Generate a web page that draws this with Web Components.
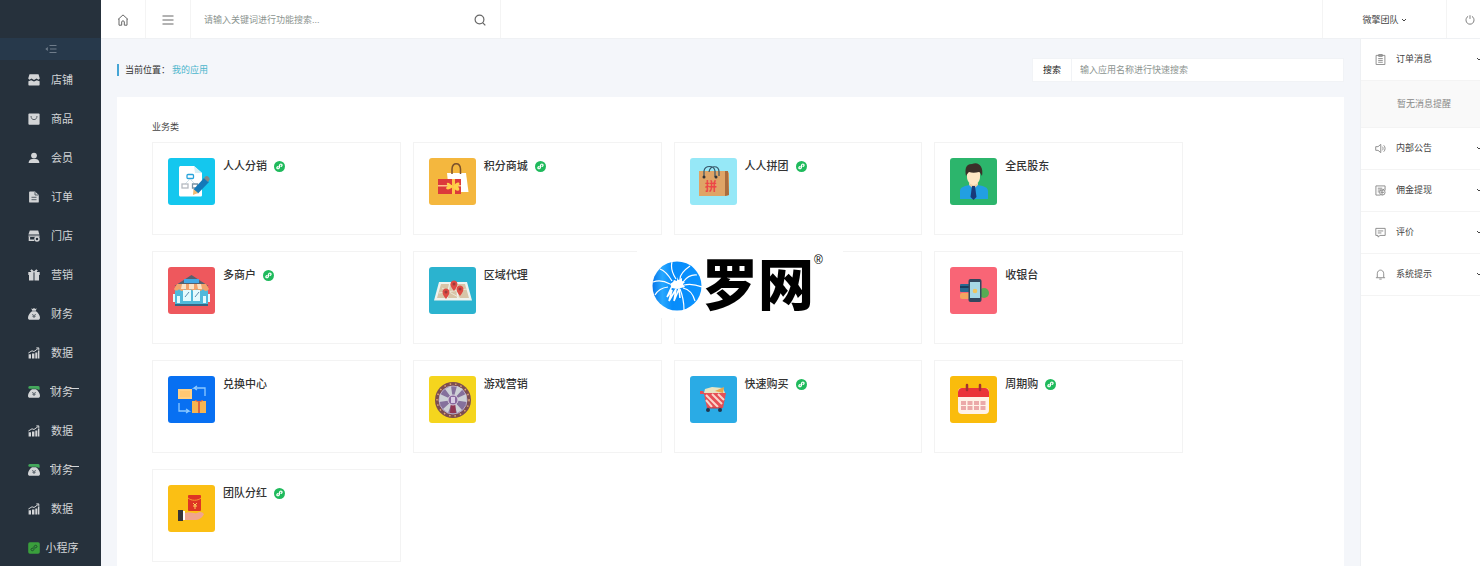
<!DOCTYPE html>
<html lang="zh-CN">
<head>
<meta charset="utf-8">
<title>我的应用</title>
<style>
html, body { margin: 0; height: 100%; }
body { overflow: hidden; background: #f4f6fa; color: #444; font: 9px/16px "Liberation Sans", "Noto Sans CJK SC", sans-serif; }
</style>
</head>
<body>
<app-shell>
  <side-nav slot="nav">
    <nav-item icon="shop">店铺</nav-item>
    <nav-item icon="goods">商品</nav-item>
    <nav-item icon="member">会员</nav-item>
    <nav-item icon="order">订单</nav-item>
    <nav-item icon="store">门店</nav-item>
    <nav-item icon="gift">营销</nav-item>
    <nav-item icon="money">财务</nav-item>
    <nav-item icon="data">数据</nav-item>
    <nav-item icon="moneyGreen" marked>财务</nav-item>
    <nav-item icon="data">数据</nav-item>
    <nav-item icon="moneyGreen" marked>财务</nav-item>
    <nav-item icon="data">数据</nav-item>
    <nav-item icon="mini">小程序</nav-item>
  </side-nav>
  <top-bar slot="top">微擎团队</top-bar>
  <page-head slot="head">我的应用</page-head>
  <app-section slot="content" heading="业务类">
    <app-card icon="doc" mini>人人分销</app-card>
    <app-card icon="points" mini>积分商城</app-card>
    <app-card icon="bag" mini>人人拼团</app-card>
    <app-card icon="person">全民股东</app-card>
    <app-card icon="mall" mini>多商户</app-card>
    <app-card icon="map">区域代理</app-card>
    <app-card></app-card>
    <app-card icon="cashier">收银台</app-card>
    <app-card icon="exchange">兑换中心</app-card>
    <app-card icon="wheel">游戏营销</app-card>
    <app-card icon="cart" mini>快速购买</app-card>
    <app-card icon="calendar" mini>周期购</app-card>
    <app-card icon="bonus" mini>团队分红</app-card>
  </app-section>
  <notice-panel slot="aside">
    <notice-row icon="clip" label="订单消息" open>暂无消息提醒</notice-row>
    <notice-row icon="sound" label="内部公告"></notice-row>
    <notice-row icon="cash" label="佣金提现"></notice-row>
    <notice-row icon="comment" label="评价"></notice-row>
    <notice-row icon="bell" label="系统提示"></notice-row>
  </notice-panel>
</app-shell>
<brand-mark>罗网</brand-mark>

<script>
const svg = (box, body) => `<svg viewBox="0 0 ${box} ${box}" aria-hidden="true">${body}</svg>`;
const line = body => svg(12, `<g fill="none" stroke="currentColor" stroke-width="1" stroke-linejoin="round">${body}</g>`);
const bagBody = `<path d="M4 3.200h4c2.200 1.500 4 4.300 4 6.500 0 1.300-.7 2.100-2 2.100H2c-1.300 0-2-.8-2-2.100 0-2.200 1.800-5 4-6.500z"/><path d="M4.300 6L6 7.800 7.700 6M4.300 8.200h3.400M6 8v2" fill="none" stroke="#4b555e" stroke-width=".9"/>`;
const tile = (color, body) => svg(47, `<rect width="47" height="47" rx="3" fill="${color}"/>${body}`);

const ICONS = {
  /* side navigation */
  shop: svg(12, `<path d="M1.500.3h9l1.300 4.200-1.300 1.300-2-1.300L6 6 3.500 4.500l-2 1.300L.2 4.500z"/><path d="M.4 7.300l2.800-1L6 7.500l2.800-1.200 2.800 1v3.200c0 .7-.3 1-1 1H1.400c-.7 0-1-.3-1-1z"/>`),
  goods: svg(12, `<rect x=".4" y=".5" width="11.200" height="11.200" rx="1"/><path d="M3 3c.2 2.600 1.200 3.600 3 3.600S8.800 5.600 9 3" fill="none" stroke="#5b6269"/>`),
  member: svg(12, `<circle cx="6" cy="3.600" r="2.900"/><path d="M.6 11c0-2.500 2-3.700 3.700-3.900h3.400c1.800.2 3.700 1.400 3.700 3.900z"/>`),
  order: svg(12, `<path d="M2 .4h5L10.800 4v6.700c0 .6-.3.900-.9.900H2c-.6 0-.9-.3-.9-.9V1.300c0-.6.300-.9.900-.9z"/><path d="M7 1v3h3.500M3.500 6.300h5M3.500 8.700h5" fill="none" stroke="#48525c" stroke-width=".9"/>`),
  store: svg(12, `<path d="M1.800.6h8.400l1.200 4H.4z"/><path d="M.4 5.400h11.200v1.300H.4zM.7 7h1.400v2.600h4V11H.7z"/><circle cx="9" cy="9" r="2" fill="none" stroke="currentColor" stroke-width="1.500"/>`),
  gift: svg(12, `<path d="M1 3.300h4.500v8.300H1zM6.500 3.300H11v8.300H6.500zM.3 3h5.200v2.900H.3zM6.500 3h5.200v2.900H6.500z"/><path d="M5.700 3C2.500 3 2.300 1 3.500.9 4.700.8 5.700 3 5.700 3zM6.300 3C9.500 3 9.700 1 8.500.9 7.300.8 6.300 3 6.300 3z" stroke="currentColor"/>`),
  money: svg(12, `<path d="M3.300.2l1.400.9L6 .1l1.300 1L8.700.2 7.800 2.700H4.200z"/>${bagBody}`),
  moneyGreen: svg(12, `<path d="M1.500 2.700C-.2 2.700 0 0 1.700 0h8.600c1.400 0 1.700 2 1 4L8 2.700z" fill="#43a85b"/>${bagBody}`),
  data: svg(12, `<path d="M.6 7.300h2.400v4.200H.6zM4 6.500h2.400v5H4zM7.300 5.500h2v6h-2zM9.900 3.400h1.500v8.100H9.900z"/><path d="M.4 6L4 3.800l2 .7L10.500 1.300M8.300.9h2.500v2.300" fill="none" stroke="currentColor"/>`),
  mini: svg(12, `<rect x=".2" y=".2" width="11.600" height="11.600" rx="1.700" fill="#3a9e3c"/><path d="M5 6.200c-1.900-.5-2.700 1.900-1.300 2.400C5 9 5.900 8.400 6 7V5c.1-1.400 1-2 2.300-1.600C9.700 3.900 8.900 6.300 7 5.800" fill="none" stroke="#1f5130"/>`),
  fold: svg(12, `<path d="M4.500 2.500h7M5 6h6.500M4.500 9.500h7" stroke="currentColor" fill="none"/><path d="M.3 6l2.500-2v4z"/>`),

  /* bars and panels */
  home: line(`<path d="M1 5.500L6 .9l5 4.600M2 4.800v6.400h2.700V8c0-1.600 2.600-1.600 2.600 0v3.200H10V4.800"/>`),
  menu: line(`<path d="M.5 2h11M.5 6h11M.5 10h11"/>`),
  search: svg(12, `<g fill="none" stroke="currentColor" stroke-width="1.200"><circle cx="5.500" cy="5.500" r="4.400"/><path d="M8.800 8.800l2.500 2.500"/></g>`),
  power: line(`<path d="M3.700 1.600C-.5 4 .8 11 6 11s6.500-7 2.300-9.400M6 .3v4.400"/>`),
  down: svg(12, `<path d="M2 4l4 4 4-4" fill="none" stroke="currentColor" stroke-width="2"/>`),
  clip: line(`<rect x="1.200" y="1.500" width="9.600" height="10"/><path d="M4 .6h4v2H4zM3.500 5h5M3.500 7h5M3.500 9h5"/>`),
  sound: line(`<path d="M.8 4h2.500l3-2.500v9l-3-2.500H.8zM8 4c1 1 1 3 0 4M9.500 2.500c2 2 2 5 0 7"/>`),
  cash: line(`<path d="M11 6V1H1v10h5M3 3.500h5M3 5.500h3M3 7.500h2M6 5l1.500 2L10 4M6 8h4M7.700 7v4"/><circle cx="8" cy="8" r="3"/>`),
  comment: line(`<path d="M.9 1.500h10.200v7.700H5.500L3.300 11V9.200H.9zM3 4.300h6M3 6.500h4"/>`),
  bell: line(`<path d="M2.500 9.300V5.200c0-5.300 7-5.300 7 0v4.100M1 9.500h10M4.700 11h2.600"/>`),
  badge: svg(12, `<circle cx="6" cy="6" r="6" fill="#1fba5c"/><path d="M4.900 6.200C3.100 5.900 2.500 8 3.800 8.400 5 8.700 5.800 8 5.900 7V5c.1-1.200 1-1.800 2.200-1.500C9.400 4 8.900 6 7.100 5.800" fill="none" stroke="#fff" stroke-width="1.300"/>`),

  /* application tiles */
  doc: tile('#14c7ee', `<path d="M13 8h13l8 7v22c0 1-.7 1.500-1.500 1.500h-20c-.9 0-1.500-.6-1.500-1.500V9.500c0-.9.600-1.500 2-1.500z" fill="#fff"/><path d="M26 8l8 7h-7z" fill="#d6eef5"/><g fill="none" stroke-width="1.300"><rect x="19" y="16.500" width="6.500" height="4" rx="1" stroke="#27a3db"/><path d="M22 21l-5 5M22 21l5 5" stroke="#c6dce5" stroke-width=".8"/><rect x="14" y="26" width="6" height="4" stroke="#b5bac0"/><path d="M24.500 26h5v4h-5z" stroke="#7893a5"/></g><path d="M36 20l5 4-11 11.500-4.500-4z" fill="#1479b8"/><path d="M36 20l2-2c1.500-.6 4 1.500 3.600 3.500L40 24z" fill="#83888a"/><path d="M25.500 31l4.500 4-5 2z" fill="#efba71"/>`),
  points: tile('#f4b73e', `<path d="M18 15h19l2.500 19H20z" fill="#fff"/><path d="M23 16v-5c.5-7 8-7 8.500 0v5" fill="none" stroke="#7a502c" stroke-width="1.500"/><path d="M9 21h23v15H9z" fill="#dc3a3b"/><path d="M9 27h23v1.500H9z" fill="#ffc08a"/><path d="M23 21h3v15h-3z" fill="#ffc444"/><path d="M24 29c-5-7-8-4-5-1-4 2-1 6 5 1 3 6 9 4 5-.5 4-4-1-7-5 .5z" fill="#ffd24a"/>`),
  bag: tile('#96e8f7', `<path d="M9 13h28l2 2v22l-3 1H9z" fill="#dfa466"/><path d="M35 13h3l1 24-4 1z" fill="#a96c3d"/><g fill="none" stroke="#365568" stroke-width="1.200"><path d="M14 19V13c1-6 10-6 11 0v6M19 14c1-7 10-7 10 0v4"/></g><circle cx="14" cy="19" r="1.500" fill="#313235"/><circle cx="26" cy="19" r="1.500" fill="#313235"/><text x="15" y="33" font-size="12" font-weight="700" fill="#ed4646">拼</text>`),
  person: tile('#2cb56c', `<path d="M10 41v-8c0-4 5-5 9-6h9c5 1 10 2 10 6v8z" fill="#229fe2"/><path d="M19 25h9v2l-4.500 4L19 27z" fill="#ecd0a5"/><path d="M17 13h13v6c0 4-3 8-6.500 8S17 23 17 19z" fill="#ffe8c4"/><path d="M16 18c-1-6-1-12 6-12 6-3 12 2 10 12-2-3-2-4-3-4-4 1-7 1-10 0-1 1-2 2-3 4z" fill="#3b3029"/><path d="M22 28h3l1.500 11-3 3-3-3z" fill="#183979"/>`),
  mall: tile('#ee585d', `<path d="M23.500 8l17 11h-34z" fill="#57616f"/><path d="M7 20h33v17H7z" fill="#50b9db"/><path d="M16 12h15v4H16z" fill="#42a8e4"/><path d="M9 17h29l3 5c-2 3-5 2-6 0-2 3-5 2-6 0-2 3-5 2-6 0-2 3-5 2-6 0-2 3-5 2-6 0-1 2-4 2-5 0z" fill="#f2a36b"/><path d="M14 17h4v5h-5zM21 17h5v5h-5zM29 17h4l1 5h-4z" fill="#f9e4c8"/><g fill="#e4fafd"><path d="M15 23h8v11h-8zM25 23h7v11h-7zM9 29h3v7H9zM35 29h3v7h-3zM5 27h2v8H5zM40 27h2v8h-2z"/></g><path d="M17 30l4-5M27 30l4-5" stroke="#5e8fb1"/><path d="M7 37h33v2H7z" fill="#346684"/>`),
  map: tile('#2bb3cf', `<path d="M10 15h28l5 18.500H5z" fill="#eef3ef"/><path d="M12 17h8l-3 14H8zM21 17h6l1 14h-9zM28 17h8l4 14H30z" fill="#d7c5a8"/><path d="M10 26l28-4M13 21l18 10" stroke="#ece7d6"/><g fill="#de4b44"><path d="M17 32c-12-14 12-14 0 0zM25 24c-12-14 12-14 0 0zM31 29c-12-14 12-14 0 0z"/></g><g fill="#9f3b3a"><circle cx="17" cy="25" r="1.500"/><circle cx="25" cy="17" r="1.500"/><circle cx="31" cy="22" r="1.500"/></g>`),
  cashier: tile('#f96576', `<circle cx="34" cy="26" r="5" fill="#56ab53"/><rect x="10" y="17" width="10" height="8" rx="1" fill="#276a91"/><path d="M10 19h10v2H10z" fill="#193e5e"/><rect x="10" y="26" width="10" height="6" rx="2" fill="#f4a560"/><rect x="18.500" y="12" width="13" height="23" rx="2" fill="#32475e"/><path d="M20 15h10v16H20z" fill="#a7d8e6"/><circle cx="25" cy="24" r="2.300" fill="#efc55f"/>`),
  exchange: tile('#0870f2', `<path d="M10 13h14v10H10z" fill="#ffd083"/><path d="M12 15h10v6H12z" fill="#ffc772"/><path d="M24 25h14v12H24z" fill="#f6b551"/><path d="M30 25h2v12h-2z" fill="#d96444"/><path d="M31 26c-4 0-5-2-3-2l3 2 3-2c2 0 1 2-3 2z" fill="#df6948"/><g fill="none" stroke="#8cc9ff" stroke-width="1.300"><path d="M37 20v-8H26l3-2m-3 2l3 2M11 27v8h10l-3-2m3 2l-3 2"/></g>`),
  wheel: tile('#f5d51e', `<circle cx="24" cy="24" r="18" fill="#7d4e50"/><circle cx="24" cy="24" r="16" fill="none" stroke="#e0a878" stroke-width="1.500" stroke-dasharray="1.500 4"/><circle cx="24" cy="24" r="14" fill="#85709c" stroke="#b9a9c6"/><path d="M24 24L16 13l6-3zM24 24l4-14 6 3zM24 24l13-6 1 8zM24 24l9 10-5 3zM24 24l-5 13-5-4zM24 24l-14 2 1-8z" fill="#cdd0d6"/><path d="M22 25h4l1 12h-6z" fill="#913653"/><circle cx="24" cy="24" r="5" fill="#8a699f" stroke="#dacfdf"/><path d="M22 21h4v6h-4z" fill="#d8cce4"/>`),
  cart: tile('#2aabe5', `<path d="M15 13l7-2 11 1 2 5H14z" fill="#e8e4c2"/><path d="M25 15l9-4-1 6z" fill="#e9a64c"/><path d="M10 15h3l1 2h22l-3 15H17l-3-14h-4z" fill="#e65055"/><path d="M16 19l12 12M22 18l10 10M16 24l6 7M28 18l6 6" stroke="#f9d6cb" stroke-width="2"/><path d="M17 32h15" stroke="#bc4148"/><circle cx="18" cy="34" r="2" fill="#20364f"/><circle cx="30" cy="34" r="2" fill="#20364f"/>`),
  calendar: tile('#fabc0c', `<rect x="8" y="12" width="31" height="26" rx="4" fill="#fff2e7"/><path d="M8 21v-5c0-2 2-4 4-4h23c2 0 4 2 4 4v5z" fill="#ea3438"/><path d="M17 9v5M30 9v5" stroke="#a43031" stroke-width="2.500" stroke-linecap="round"/><path d="M11 27h26M11 32h26" stroke="#eba9a9" stroke-width="4" stroke-dasharray="5 1.500"/>`),
  bonus: tile('#fbbf14', `<rect x="20" y="10" width="13" height="16" rx="1" fill="#de3524"/><path d="M20 13c3 3 10 3 13 0" stroke="#f89932" fill="none"/><path d="M25 18l2 2 2-2M27 20v4M25 21h4" stroke="#ffd05d" fill="none"/><path d="M10 25h5v11h-5z" fill="#363438"/><path d="M15 26h2v9h-2z" fill="#fff"/><path d="M17 28c6-2 8 1 12 0 4-2 5-1 7 1-2 4-5 6-10 6h-9z" fill="#f0a58e"/>`)
};

/* Base class: one open shadow root filled from the element's own view(). */
class View extends HTMLElement {
  connectedCallback() {
    if (this.shadowRoot) return;
    const t = document.createElement('template');
    t.innerHTML = `<style>*{box-sizing:border-box}svg{display:block;width:100%;height:100%}${this.css()}</style>${this.view()}`;
    this.attachShadow({ mode: 'open' }).append(t.content.cloneNode(true));
  }
  css() { return ''; }
  view() { return '<slot></slot>'; }
}

customElements.define('ui-icon', class extends View {
  css() { return `:host{display:block;flex:none;width:12px;height:12px}svg{fill:currentColor}`; }
  view() { return ICONS[this.getAttribute('name')]; }
});

customElements.define('app-shell', class extends View {
  css() { return `
    :host{display:grid;grid-template:auto 1fr / 101px minmax(0,1fr) 120px;height:100vh;overflow:hidden}
    .nav{grid-row:1 / 3;background:#26313c;min-height:0}
    .top{grid-column:2 / 4}
    main{padding:19px 16px 0;min-width:0;min-height:0}
    aside{background:#fff;min-width:0;border-left:1px solid #eef0f3}`; }
  view() { return `<div class="nav"><slot name="nav"></slot></div><header class="top"><slot name="top"></slot></header>
    <main><slot name="head"></slot><slot name="content"></slot></main><aside><slot name="aside"></slot></aside>`; }
});

customElements.define('side-nav', class extends View {
  css() { return `:host{display:block;padding-top:38px;color:#d3d5d7}
    button{display:flex;justify-content:center;align-items:center;width:100%;height:22px;padding:0;border:0;background:#27394b;color:#6f7c8a}
    nav{display:flex;flex-direction:column}`; }
  view() { return `<button type="button" aria-label="收起菜单"><ui-icon name="fold"></ui-icon></button><nav><slot></slot></nav>`; }
});

customElements.define('nav-item', class extends View {
  css() { return `:host{display:block}
    a{display:flex;align-items:center;gap:5px;height:39px;padding-left:28px;color:inherit;text-decoration:none;font-size:11px}
    span{position:relative;width:34px;text-align:center;white-space:nowrap}
    :host([marked]) span::before,:host([marked]) span::after{content:"";position:absolute;top:4px;height:1px;background:currentColor}
    :host([marked]) span::before{left:5px;width:3px}
    :host([marked]) span::after{right:0;width:9px}`; }
  view() { return `<a href="#"><ui-icon name="${this.getAttribute('icon')}"></ui-icon><span><slot></slot></span></a>`; }
});

customElements.define('top-bar', class extends View {
  css() { return `
    :host{display:flex;height:39px;background:#fff;border-bottom:1px solid #eff1f4;box-sizing:border-box;color:#666}
    button{display:flex;align-items:center;justify-content:center;gap:2px;padding:2px 0 0;border:0;border-right:1px solid #f4f4f4;background:none;color:inherit;font:inherit}
    .sq{width:45px}
    form{display:flex;align-items:center;width:310px;padding:2px 14px 0 13px;border-right:1px solid #f4f4f4}
    input{flex:1;min-width:0;padding:0;border:0;outline:0;background:none;font:inherit;color:#555}
    input::placeholder{color:#8c9490}
    form button{padding:0;border:0}
    .user{width:125px;margin-left:auto;border-left:1px solid #f4f4f4;color:#444}
    .user ui-icon{width:6px;height:6px}
    .power{width:33px;padding-left:12px;border:0}
    .power ui-icon{width:10px;height:10px}`; }
  view() { return `<button class="sq" type="button" aria-label="首页"><ui-icon name="home"></ui-icon></button>
    <button class="sq" type="button" aria-label="菜单"><ui-icon name="menu"></ui-icon></button>
    <form><input type="search" aria-label="功能搜索" placeholder="请输入关键词进行功能搜索..."><button type="button" aria-label="搜索"><ui-icon name="search"></ui-icon></button></form>
    <button class="user" type="button"><slot></slot><ui-icon name="down"></ui-icon></button>
    <button class="power" type="button" aria-label="退出"><ui-icon name="power"></ui-icon></button>`; }
});

customElements.define('page-head', class extends View {
  css() { return `
    :host{display:flex;align-items:center;justify-content:space-between;margin-bottom:15px}
    .crumb{display:flex;gap:2px;border-left:2px solid #45a5d5;padding-left:6px;line-height:12px;color:#333}
    a{color:#4bb5cc;text-decoration:none}
    form{display:flex;width:312px;height:24px;background:#fff;border:1px solid #f1f3f6}
    label{width:39px;text-align:center;line-height:22px;border-right:1px solid #f1f3f6;color:#222}
    input{flex:1;min-width:0;border:0;outline:0;padding:0 8px;background:none;font:inherit}
    input::placeholder{color:#8c9490}`; }
  view() { return `<div class="crumb"><span>当前位置：</span><a href="#"><slot></slot></a></div>
    <form><label for="q">搜索</label><input id="q" type="text" placeholder="输入应用名称进行快速搜索"></form>`; }
});

customElements.define('app-section', class extends View {
  css() { return `
    :host{display:block;background:#fff;padding:22px 161px 40px 35px}
    h2{margin:0 0 7px;font:inherit;color:#444}
    div{display:grid;grid-template-columns:repeat(4,minmax(0,1fr));gap:16px 12px}`; }
  view() { return `<h2>${this.getAttribute('heading')}</h2><div><slot></slot></div>`; }
});

customElements.define('app-card', class extends View {
  css() { return `
    :host{display:flex;box-sizing:border-box;gap:8px;min-height:93px;padding:15px;border:1px solid #f3f3f3}
    .tile{width:47px;height:47px}
    a{display:flex;align-items:center;align-self:flex-start;gap:7px;color:#333;text-decoration:none;font-size:11px;font-weight:500}
    a ui-icon{width:11px;height:11px}`; }
  view() {
    const icon = this.getAttribute('icon');
    return icon ? `<ui-icon class="tile" name="${icon}"></ui-icon><a href="#"><slot></slot>${this.hasAttribute('mini') ? '<ui-icon name="badge"></ui-icon>' : ''}</a>` : '';
  }
});

customElements.define('notice-panel', class extends View {
  css() { return `:host{display:block;overflow:hidden}`; }
});

customElements.define('notice-row', class extends View {
  css() { return `
    :host{display:block}
    button{display:flex;align-items:center;gap:10px;width:100%;height:42px;padding:0 0 1px 14px;border:0;border-bottom:1px solid #f4f4f4;background:none;font:inherit;color:#444;text-align:left}
    ui-icon{width:11px;height:11px;color:#888}
    .down{width:6px;height:6px;margin-left:auto;margin-right:-2px;color:#444}
    p{display:flex;align-items:center;height:47px;margin:0;padding-left:36px;background:#f9f9f9;border-bottom:1px solid #f4f4f4;color:#888;white-space:nowrap}`; }
  view() { return `<button type="button"><ui-icon name="${this.getAttribute('icon')}"></ui-icon><span>${this.getAttribute('label')}</span><ui-icon class="down" name="down"></ui-icon></button>${this.hasAttribute('open') ? '<p><slot></slot></p>' : ''}`; }
});

/* Brand watermark that floats over the middle of the window. */
customElements.define('brand-mark', class extends View {
  css() { return `
    :host{position:fixed;left:50%;top:50%;transform:translate(-50%,-50%);display:flex;align-items:center;box-sizing:border-box;width:206px;height:70px;padding:6px 0 0 15px;background:#fff;color:#000;pointer-events:none}
    svg{width:50px;height:50px;flex:none}
    b{font-size:56px;line-height:60px;font-weight:900;white-space:nowrap}
    sup{align-self:flex-start;font-size:12px;line-height:12px;vertical-align:baseline}`; }
  view() { return `<svg viewBox="0 0 50 50" aria-hidden="true"><defs><linearGradient id="g"><stop stop-color="#0876ea"/><stop offset=".2" stop-color="#28a8ff"/><stop offset=".4" stop-color="#078cfa"/><stop offset="1" stop-color="#0b93ff"/></linearGradient></defs>
    <circle cx="25" cy="25" r="24.500" fill="url(#g)"/>
    <path d="M25 16l1 3 4-2 0 3 3 1-2 2 2 3-4 1-4 1-5-1-2-4 3-2 1-2 3 1z" fill="#fff"/>
    <path d="M24 18Q18 9 20 1M20 20Q14 10 8 8M18 23Q9 18 1 21M16 26Q7 27 3 34M28 18Q28 12 38 5M31 21Q37 13 45 14M32 24Q40 22 50 26M31 27Q40 29 43 40M28 28Q32 38 32 49" fill="none" stroke="#fff" stroke-width="1.200"/><path d="M20 25L15 36 20 29 17 40 24 28 22 40 27 28 28 37" fill="none" stroke="#fff" stroke-width="1.600"/></svg>
    <b><slot></slot></b><sup>®</sup>`; }
});
</script>
</body>
</html>
